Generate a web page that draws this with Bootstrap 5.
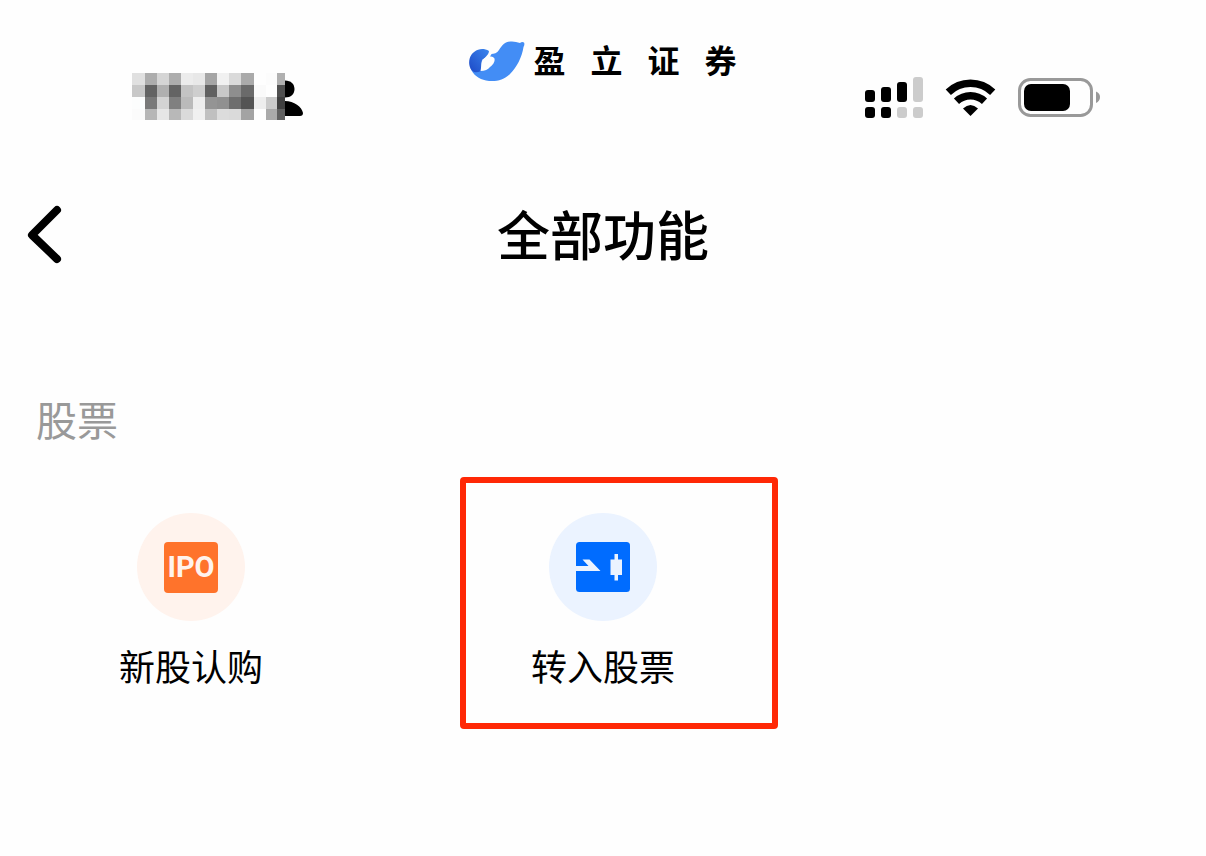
<!DOCTYPE html>
<html lang="zh-CN">
<head>
<meta charset="utf-8">
<meta name="viewport" content="width=device-width, initial-scale=1">
<title>全部功能</title>
<link href="https://cdn.jsdelivr.net/npm/bootstrap@5.3.0/dist/css/bootstrap.min.css" rel="stylesheet">
<style>
  body { background: #fefefe; color: #000; font-family: "Noto Sans CJK SC", sans-serif; }
  svg { display: block; flex: none; }
  .status-bar { padding: 41px 106px 0; height: 120px; }
  .status-side { flex: 1 1 0; margin-top: 32px; }
  .status-clock svg { margin-left: 26px; }
  .brand { gap: 8px; }
  .brand-name { gap: 25px; font-size: 32px; line-height: 36px; font-weight: 700; }
  .title-bar { padding: 77px 24px 0; height: 196px; }
  .title-side { flex: 1 1 0; }
  .back-btn { width: 44px; height: 76px; padding: 0; border: 0; background: none; }
  .page-title { font-size: 53px; line-height: 72px; font-weight: 500; }
  .section-name { margin-top: 72px; padding-left: 36px; font-size: 41px; line-height: 60px; font-weight: 400; color: #999; }
  .feature-grid { display: grid; grid-template-columns: repeat(3, 144px); justify-content: space-between; padding: 65px 119px; }
  .feature { color: #000; font-size: 36px; line-height: 48px; gap: 20px; }
  .feature-icon { width: 108px; height: 108px; }
  .tone-orange { background: #fff3ed; }
  .tone-blue { background: #ebf3ff; }
  .ipo-tile { width: 54px; height: 51px; border-radius: 4px; background: #ff732b; color: #fff3ed; font: 700 29px/51px Roboto, sans-serif; }
  .highlight { top: -36px; left: -71px; width: 318px; height: 252px; border: 6px solid #ff2805; border-radius: 4px; pointer-events: none; }
</style>
</head>
<body>
<header class="status-bar d-flex justify-content-between align-items-start">
  <div class="status-side status-clock d-flex">
    <svg width="172" height="48" viewBox="132 73 172 48" role="img" aria-label="时间">
      <g shape-rendering="crispEdges">
        <path fill="#e0e0e0" d="M132 73h13v12h-13z"/><path fill="#adadad" d="M145 73h12v12h-12z"/><path fill="#d5d5d5" d="M157 73h12v12h-12z"/><path fill="#adadad" d="M169 73h12v12h-12z"/><path fill="#ececec" d="M181 73h12v12h-12z"/><path fill="#e8e8e8" d="M193 73h12v12h-12z"/><path fill="#a5a5a5" d="M205 73h12v12h-12z"/><path fill="#f1f1f1" d="M217 73h12v12h-12z"/><path fill="#dadada" d="M229 73h12v12h-12z"/><path fill="#aaa" d="M241 73h13v12h-13z"/><path fill="#fcfcfc" d="M266 73h11v12h-11z"/><path fill="#b0b0b0" d="M277 73h8v12h-8z"/>
        <path fill="#c8c8c8" d="M132 85h13v12h-13z"/><path fill="#636363" d="M145 85h12v12h-12z"/><path fill="#b0b0b0" d="M157 85h12v12h-12z"/><path fill="#646464" d="M169 85h12v12h-12z"/><path fill="#c3c3c3" d="M181 85h12v12h-12z"/><path fill="#cecece" d="M193 85h12v12h-12z"/><path fill="#606060" d="M205 85h12v12h-12z"/><path fill="#c8c8c8" d="M217 85h12v12h-12z"/><path fill="#8e8e8e" d="M229 85h12v12h-12z"/><path fill="#6a6a6a" d="M241 85h13v12h-13z"/><path fill="#fafafa" d="M254 85h12v12h-12z"/><path fill="#505050" d="M277 85h8v12h-8z"/>
        <path fill="#fcfdfd" d="M132 97h13v12h-13z"/><path fill="#797979" d="M145 97h12v12h-12z"/><path fill="#d3d3d3" d="M157 97h12v12h-12z"/><path fill="#808080" d="M169 97h12v12h-12z"/><path fill="#bababa" d="M181 97h12v12h-12z"/><path fill="#ededed" d="M193 97h12v12h-12z"/><path fill="#949494" d="M205 97h12v12h-12z"/><path fill="#909090" d="M217 97h12v12h-12z"/><path fill="#6e6e6e" d="M229 97h12v12h-12z"/><path fill="#545454" d="M241 97h13v12h-13z"/><path fill="#eee" d="M254 97h12v12h-12z"/><path fill="#cbcbcb" d="M266 97h11v12h-11z"/><path fill="#404040" d="M277 97h8v12h-8z"/>
        <path fill="#fbfbfb" d="M132 109h13v11h-13z"/><path fill="#b6b6b6" d="M145 109h12v11h-12z"/><path fill="#e6e6e6" d="M157 109h12v11h-12z"/><path fill="#b8b8b8" d="M169 109h12v11h-12z"/><path fill="#dadada" d="M181 109h12v11h-12z"/><path fill="#f0f0f0" d="M193 109h12v11h-12z"/><path fill="#c0c0c0" d="M205 109h12v11h-12z"/><path fill="#dcdcdc" d="M217 109h12v11h-12z"/><path fill="#dadada" d="M229 109h12v11h-12z"/><path fill="#a3a3a3" d="M241 109h13v11h-13z"/><path fill="#aaa" d="M266 109h11v11h-11z"/><path fill="#606060" d="M277 109h8v11h-8z"/>
      </g>
      <path d="M285 80.500C291 80.500 294.500 84 294.500 89S291 97.500 285 97.500zM285 101C294 101 302 107 303 113Q303 116 300 116H285z"/>
    </svg>
  </div>
  <div class="brand d-flex align-items-start">
    <svg width="56" height="41" viewBox="0 0 56 41" aria-hidden="true">
      <defs>
        <linearGradient id="ball" x1="1" y1="0" x2="0" y2="1"><stop offset="0" stop-color="#3b86ee"/><stop offset="1" stop-color="#1d49c6"/></linearGradient>
      </defs>
      <path fill="#438df5" d="M22 13C25 13 28 12 30 9C33 4 36 1 41 .5Q46 0 51 2Q53 .5 55 1.500Q56 3 54.500 6C53 16 48 26 41 33C34 40 25 41 17 39.500C10 38 4 34 1.500 27L10 22z"/>
      <path fill="url(#ball)" d="M20 10C12 5 3 10 .8 17C-1 23 1 29 5 31Q8 32 12 30L13 19L19 15z"/>
      <path fill="#fefefe" d="M24.500 10C20 10 18.500 15 15 17.500C11 21 13 24 11.500 30Q18 30 21 26C25 23 26 20 25.500 17.500Q24 15 21 15.500z"/>
    </svg>
    <div class="brand-name d-flex"><span>盈</span><span>立</span><span>证</span><span>券</span></div>
  </div>
  <div class="status-side d-flex justify-content-end">
    <svg width="235" height="48" viewBox="865 73 235 48" role="img" aria-label="信号、无线网络与电池">
      <rect x="865" y="90" width="10" height="12" rx="3"/><rect x="881" y="87" width="10" height="15" rx="3"/><rect x="897" y="82" width="10" height="20" rx="3"/><rect x="913" y="77" width="10" height="25" rx="3" fill="#ccc"/>
      <rect x="865" y="107" width="10" height="11" rx="3"/><rect x="881" y="107" width="10" height="11" rx="3"/><rect x="897" y="107" width="10" height="11" rx="3" fill="#ccc"/><rect x="913" y="107" width="10" height="11" rx="3" fill="#ccc"/>
      <g fill="none" stroke="#000" stroke-width="7.500"><path d="M948.300 92.200A32 32 0 0 1 992.700 92.200"/><path d="M956.500 101.300A20.500 20.500 0 0 1 984.500 101.300"/></g>
      <path d="M963 108.500Q970.500 101.500 978 108.500L970.500 116z"/>
      <rect x="1019.500" y="79.500" width="72" height="36" rx="11" fill="none" stroke="#999" stroke-width="3"/>
      <rect x="1024" y="84" width="46" height="27" rx="7"/>
      <path fill="#999" d="M1096 91.500Q1100 93 1100 97T1096 103z"/>
    </svg>
  </div>
</header>

<nav class="title-bar d-flex align-items-start" aria-label="页面标题">
  <div class="title-side">
    <button type="button" class="back-btn" aria-label="返回">
      <svg width="44" height="76" viewBox="0 0 44 76" fill="none" stroke="#000" stroke-width="8" stroke-linecap="round" stroke-linejoin="round"><path d="M33 13L8 38L33 62"/></svg>
    </button>
  </div>
  <h1 class="page-title mb-0">全部功能</h1>
  <div class="title-side"></div>
</nav>

<main>
  <h2 class="section-name mb-0">股票</h2>
  <div class="feature-grid">
    <a href="#ipo" class="feature d-flex flex-column align-items-center text-decoration-none text-nowrap">
      <span class="feature-icon tone-orange rounded-circle d-flex align-items-center justify-content-center"><span class="ipo-tile text-center">IPO</span></span>
      <span>新股认购</span>
    </a>
    <a href="#transfer" class="feature position-relative d-flex flex-column align-items-center text-decoration-none text-nowrap">
      <span class="feature-icon tone-blue rounded-circle d-flex align-items-center justify-content-center">
        <svg width="54" height="50" viewBox="0 0 54 50" aria-hidden="true"><rect width="54" height="50" rx="3.500" fill="#006cff"/><path fill="#ebf3ff" d="M0 24H12.500L6.500 17.500H13.500L24.500 29H0zM38.500 12H42V17.500H46V33H42V38.500H38.500V33H34.500V17.500H38.500z"/></svg>
      </span>
      <span>转入股票</span>
      <span class="highlight position-absolute"></span>
    </a>
  </div>
</main>
<script src="https://cdn.jsdelivr.net/npm/bootstrap@5.3.0/dist/js/bootstrap.bundle.min.js"></script>
</body>
</html>
